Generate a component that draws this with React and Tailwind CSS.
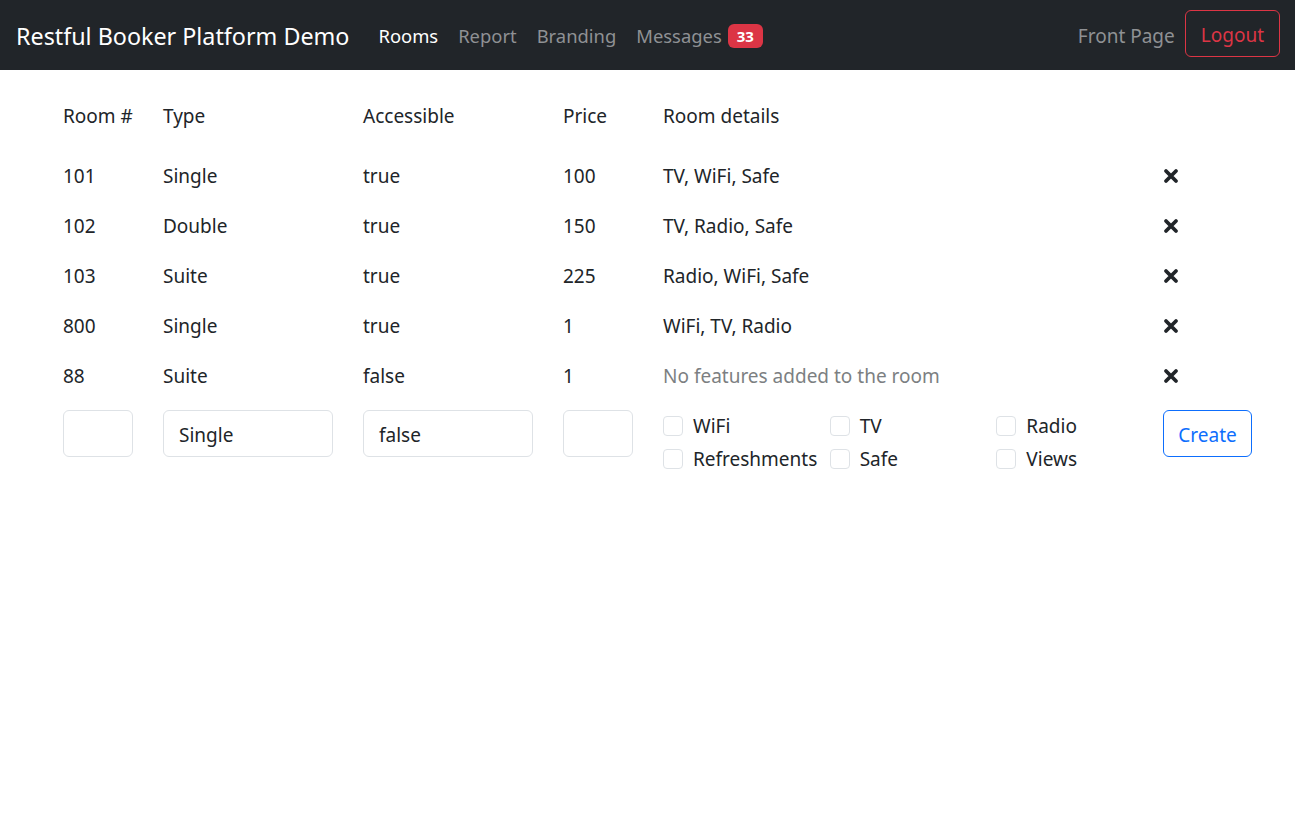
import React from 'react';

const rooms = [
  { num: '101', type: 'Single', acc: 'true', price: '100', details: 'TV, WiFi, Safe' },
  { num: '102', type: 'Double', acc: 'true', price: '150', details: 'TV, Radio, Safe' },
  { num: '103', type: 'Suite', acc: 'true', price: '225', details: 'Radio, WiFi, Safe' },
  { num: '800', type: 'Single', acc: 'true', price: '1', details: 'WiFi, TV, Radio' },
  { num: '88', type: 'Suite', acc: 'false', price: '1', details: '' },
];

const features = ['WiFi', 'TV', 'Radio', 'Refreshments', 'Safe', 'Views'];

function Cross() {
  return (
    <svg width="16" height="16" viewBox="0 0 16 16">
      <path d="M3 3 L13 13 M13 3 L3 13" stroke="#212529" strokeWidth="3.8" strokeLinecap="round" />
    </svg>
  );
}

export default function App() {
  return (
    <div className="min-h-[814px] bg-white text-[#212529] font-['Noto_Sans','Open_Sans',sans-serif]">
      <nav className="h-[70px] bg-[#212529] flex items-center pl-4 pr-[15px] pt-[2px]">
        <span className="text-white text-[23.3px] mr-[29px]">Restful Booker Platform Demo</span>
        <div className="flex items-center gap-5 text-[18.4px]">
          <span className="text-white">Rooms</span>
          <span className="text-[#8f9194]">Report</span>
          <span className="text-[#8f9194]">Branding</span>
          <span className="text-[#8f9194] flex items-center gap-[6px]">
            Messages
            <span className="bg-[#dc3545] text-white text-[15px] font-bold rounded-[6px] px-[9px] h-[24px] flex items-center">33</span>
          </span>
        </div>
        <div className="ml-auto flex items-center gap-[10px]">
          <span className="text-[#8f9194] text-[19px]">Front Page</span>
          <button className="h-[47px] px-[15px] mb-[5px] pt-[3px] border border-[#dc3545] text-[#dc3545] rounded-[6px] text-[19px]">Logout</button>
        </div>
      </nav>

      <div className="pl-[63px] pr-[44px] text-[19px]">
        <div className="grid grid-cols-[100px_200px_200px_100px_500px_100px] h-[81px] pt-[11px] items-center">
          <span>Room #</span>
          <span>Type</span>
          <span>Accessible</span>
          <span>Price</span>
          <span>Room details</span>
          <span></span>
        </div>
        {rooms.map((r) => (
          <div key={r.num} className="grid grid-cols-[100px_200px_200px_100px_500px_100px] h-[50px] items-center">
            <span>{r.num}</span>
            <span>{r.type}</span>
            <span>{r.acc}</span>
            <span>{r.price}</span>
            {r.details ? <span>{r.details}</span> : <span className="text-[#7c7f82]">No features added to the room</span>}
            <span className="flex"><Cross /></span>
          </div>
        ))}
        <div className="grid grid-cols-[100px_200px_200px_100px_500px_100px] items-start pt-[9px]">
          <div className="pr-[30px]"><div className="h-[47px] border border-[#dee2e6] rounded-[6px]"></div></div>
          <div className="pr-[30px]"><div className="h-[47px] border border-[#dee2e6] rounded-[6px] flex items-center px-[15px] pt-[3px]">Single</div></div>
          <div className="pr-[30px]"><div className="h-[47px] border border-[#dee2e6] rounded-[6px] flex items-center px-[15px] pt-[3px]">false</div></div>
          <div className="pr-[30px]"><div className="h-[47px] border border-[#dee2e6] rounded-[6px]"></div></div>
          <div className="grid grid-cols-3 gap-y-[13px] pt-[6px]">
            {features.map((f) => (
              <label key={f} className="flex items-center gap-[10px] h-[20px]">
                <span className="w-[20px] h-[20px] border border-[#dee2e6] rounded-[4px] shrink-0"></span>
                <span>{f}</span>
              </label>
            ))}
          </div>
          <div>
            <button className="h-[47px] w-[89px] pt-[3px] border border-[#0d6efd] text-[#0d6efd] rounded-[6px] text-[19px]">Create</button>
          </div>
        </div>
      </div>
    </div>
  );
}
